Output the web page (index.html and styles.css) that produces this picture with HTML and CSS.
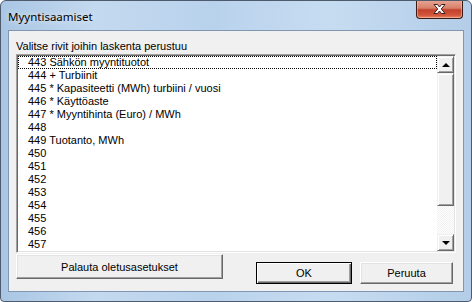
FILE: index.html
```html
<!DOCTYPE html>
<html lang="fi">
<head>
  <meta charset="UTF-8">
  <title>Myyntisaamiset</title>
  <link rel="stylesheet" href="styles.css">
</head>
<body>
  <div class="window">
    <div class="titlebar">
      <span class="title">Myyntisaamiset</span>
      <div class="close-btn">
        <svg width="17" height="12" viewBox="0 0 17 12">
          <path d="M3 1.5h3.5l2 2.5 2-2.5h3.5l-3.7 4.5 3.7 4.5h-3.5l-2-2.5-2 2.5h-3.5l3.7-4.5z" fill="#fff" stroke="#3b2020" stroke-width="1" stroke-linejoin="round"/>
        </svg>
      </div>
    </div>

    <div class="client">
      <div class="caption">Valitse rivit joihin laskenta perustuu</div>

      <div class="listbox">
        <ul class="items">
          <li class="focused">443 Sähkön myyntituotot</li>
          <li>444 + Turbiinit</li>
          <li>445 * Kapasiteetti (MWh) turbiini / vuosi</li>
          <li>446 * Käyttöaste</li>
          <li>447 * Myyntihinta (Euro) / MWh</li>
          <li>448</li>
          <li>449 Tuotanto, MWh</li>
          <li>450</li>
          <li>451</li>
          <li>452</li>
          <li>453</li>
          <li>454</li>
          <li>455</li>
          <li>456</li>
          <li>457</li>
        </ul>
        <div class="scrollbar">
          <div class="sb-btn"><span class="arrow-up"></span></div>
          <div class="sb-thumb"></div>
          <div class="sb-track"></div>
          <div class="sb-btn"><span class="arrow-down"></span></div>
        </div>
      </div>

      <div class="actions">
        <button class="btn btn-reset">Palauta oletusasetukset</button>
        <div class="dialog-btns">
          <button class="btn btn-default">OK</button>
          <button class="btn btn-cancel">Peruuta</button>
        </div>
      </div>
    </div>
  </div>
</body>
</html>
```

FILE: styles.css
```css
body {
  margin: 0;
  padding: 0;
  background: #fff;
  font-family: 'Liberation Sans', Arial, sans-serif;
  font-size: 11px;
}

.window {
  width: 472px;
  height: 302px;
  box-sizing: border-box;
  border: 1px solid #4d5b6c;
  border-radius: 6px 6px 4px 4px;
  background: linear-gradient(90deg, #a9c6e4 0%, #c3d9ef 20%, #b9d2ec 45%, #c6dcf1 70%, #b3cde8 100%);
  display: flex;
  flex-direction: column;
  overflow: hidden;
}

.titlebar {
  height: 29px;
  display: flex;
  justify-content: space-between;
  align-items: flex-start;
}

.title {
  font-family: 'Noto Sans', 'Open Sans', sans-serif;
  font-size: 11.5px;
  color: #000;
  margin: 8px 0 0 7px;
  text-shadow: 0 0 6px rgba(255, 255, 255, 0.9);
}

.close-btn {
  width: 45px;
  height: 18px;
  margin-right: 8px;
  margin-top: -1px;
  border: 1px solid #3a1a16;
  border-top: none;
  border-radius: 0 0 4px 4px;
  background: linear-gradient(180deg, #e9a896 0%, #d8806a 45%, #c4402a 55%, #d2563c 85%, #e68c6c 100%);
  box-shadow: inset 0 0 0 1px rgba(255, 200, 180, 0.5);
  display: flex;
  justify-content: center;
  align-items: center;
}

.client {
  margin: 0 7px;
  height: 262px;
  box-sizing: border-box;
  border: 1px solid #8196b0;
  background: #f0f0f0;
  padding: 9px 7px 0 7px;
  display: flex;
  flex-direction: column;
}

.caption {
  line-height: 13px;
  height: 14px;
  color: #000;
}

.listbox {
  width: 440px;
  height: 199px;
  box-sizing: border-box;
  border: 1px solid;
  border-color: #a0a0a0 #fff #fff #a0a0a0;
  box-shadow: inset 1px 1px 0 #696969, inset -1px -1px 0 #e3e3e3;
  background: #fff;
  padding: 1px;
  display: flex;
}

.items {
  list-style: none;
  margin: 0;
  padding: 0;
  flex: 1;
  overflow: hidden;
}

.items li {
  height: 13px;
  line-height: 13px;
  padding-left: 10px;
  color: #000;
  white-space: nowrap;
}

.items li.focused {
  outline: 1px dotted #000;
  outline-offset: -1px;
}

.scrollbar {
  width: 17px;
  display: flex;
  flex-direction: column;
}

.sb-btn,
.sb-thumb {
  box-sizing: border-box;
  background: #f0f0f0;
  border: 1px solid;
  border-color: #f0f0f0 #696969 #696969 #f0f0f0;
  box-shadow: inset 1px 1px 0 #fff, inset -1px -1px 0 #a0a0a0;
}

.sb-btn {
  height: 17px;
  display: flex;
  justify-content: center;
  align-items: center;
}

.sb-thumb {
  height: 133px;
}

.sb-track {
  flex: 1;
  background-color: #fff;
  background-image: repeating-conic-gradient(#f0f0f0 0 25%, #fff 0 50%);
  background-size: 2px 2px;
}

.arrow-up,
.arrow-down {
  width: 0;
  height: 0;
  border-left: 4px solid transparent;
  border-right: 4px solid transparent;
}

.arrow-up {
  border-bottom: 4px solid #000;
}

.arrow-down {
  border-top: 4px solid #000;
}

.actions {
  display: flex;
  justify-content: space-between;
  width: 437px;
  margin-top: 1px;
}

.dialog-btns {
  display: flex;
  gap: 8px;
  margin-top: 8px;
}

.btn {
  font-family: 'Liberation Sans', Arial, sans-serif;
  font-size: 11px;
  color: #000;
  background: #f0f0f0;
  box-sizing: border-box;
  border: 1px solid;
  border-color: #fff #696969 #696969 #fff;
  box-shadow: inset -1px -1px 0 #a0a0a0, inset 1px 1px 0 #e3e3e3;
  padding: 0;
  margin: 0;
}

.btn-reset {
  width: 207px;
  height: 25px;
}

.btn-default {
  width: 96px;
  height: 22px;
  border: 1px solid #000;
  box-shadow: inset 1px 1px 0 #fff, inset -1px -1px 0 #696969, inset -2px -2px 0 #a0a0a0;
}

.btn-cancel {
  width: 93px;
  height: 22px;
}
```
